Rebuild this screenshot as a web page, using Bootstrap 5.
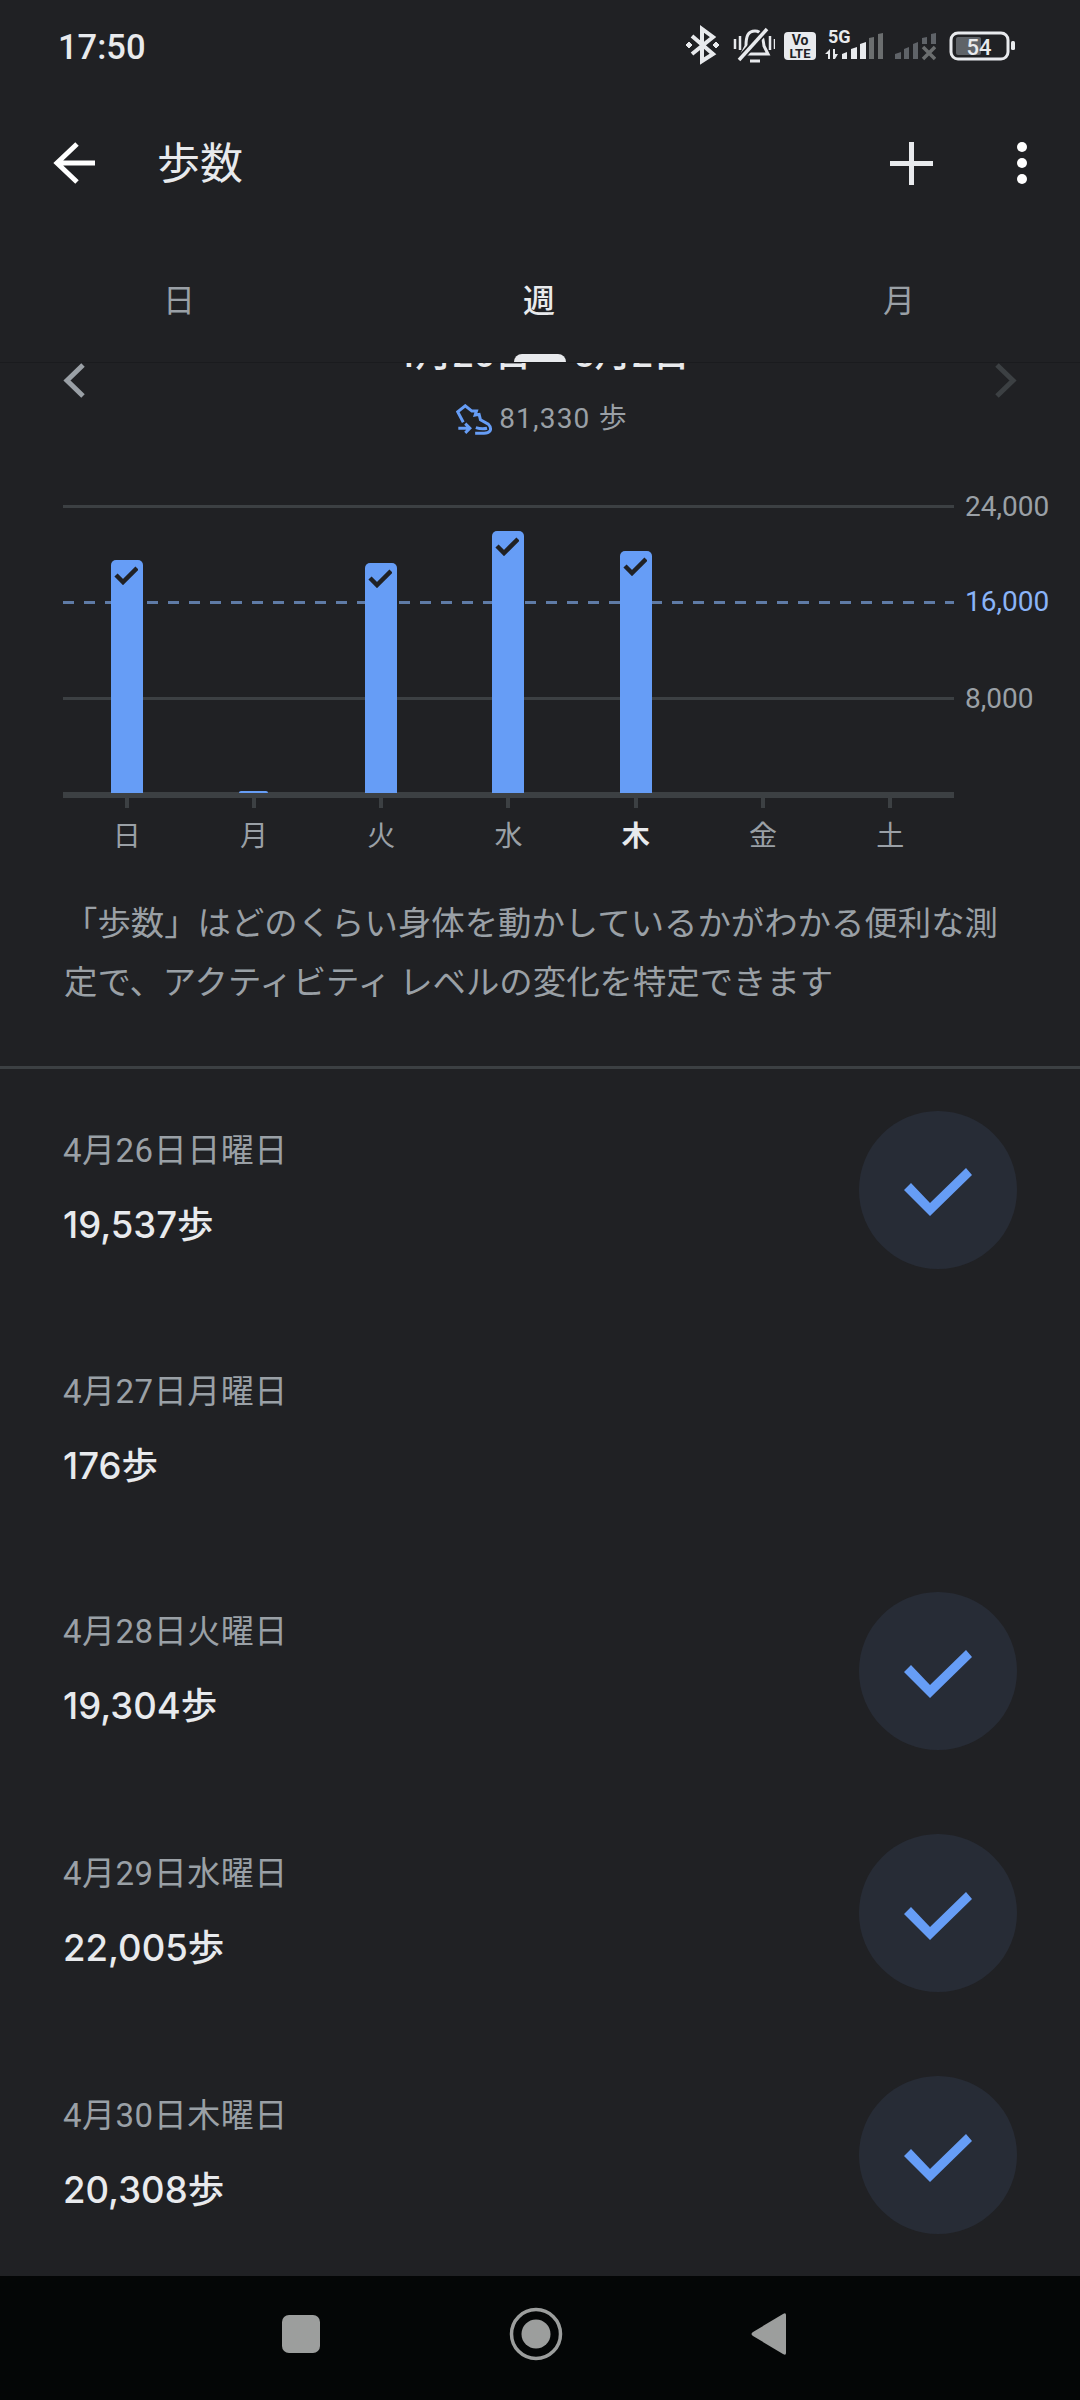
<!doctype html>
<html lang="ja">
<head>
<meta charset="utf-8">
<title>歩数</title>
<link href="https://cdn.jsdelivr.net/npm/bootstrap@5.3.0/dist/css/bootstrap.min.css" rel="stylesheet">
<style>
html,body{margin:0;background:#202124}
body{font-family:Roboto,"Noto Sans CJK JP",sans-serif;color:#e8eaed}
.screen{width:1080px;height:2400px;overflow:hidden;background:#202124}
.status-row{height:86px;padding:0 65px 0 58px}
.clock{font-size:34.5px;line-height:40px;margin-top:27px;font-weight:500}
.status-icons{margin-top:25px}
.status-row svg{display:block}
.gap-a{margin-left:14px}.gap-b{margin-left:9px}.gap-c{margin-left:11px}.gap-d{margin-left:13px}
.app-row{height:154px;padding-left:53px;padding-right:53px}
.app-title{font-size:43px;line-height:52px;margin-left:62px;padding-top:2px}
.act-plus{margin-right:84px}
.tab-row{height:122px;position:relative}
.tab-cell{font-size:32px;line-height:40px;color:#9aa0a6;text-align:center;padding:0 2px 0 0}
.tab-cell.is-on{color:#e8eaed;font-weight:500}
.tab-mark{position:absolute;left:514px;bottom:0;width:52px;height:8px;background:#e8eaed;border-radius:8px 8px 0 0}
.head-wrap{border-bottom:1px solid #1a1b1e}
.range-row{height:35px;padding:0 63px}
.range-clip{height:10px;overflow:hidden;font-size:37px;font-weight:500;line-height:44px;align-self:flex-start;padding-left:4px}
.range-clip span{display:block;margin-top:-30px;white-space:nowrap}
.total-row{height:40px;font-size:28px;line-height:40px;color:#9aa0a6;gap:6px;letter-spacing:1.2px;padding-top:2px;margin-left:4px}
.plot{position:relative;width:891px;margin:67px 0 0 63px;height:287px}
.gline{height:96px;border-top:3px solid #3c4043;position:relative}
.gline.dash{border-top:0;height:96px}
.gline.dash::before{content:"";display:block;height:3px;background:repeating-linear-gradient(90deg,#5f7ba6 0 11px,transparent 11px 21px)}
.gline b{position:absolute;left:902px;top:-19px;font-weight:400;font-size:28px;line-height:36px;color:#9aa0a6;white-space:nowrap}
.gline.dash b{color:#8ab4f8;top:-17px}
.bar-lay{position:absolute;left:0;right:0;top:0;height:288px;display:grid;grid-template-columns:repeat(7,1fr);align-items:end;justify-items:center}
.bar-col{width:32px;background:#669df6;border-radius:5px 5px 0 0;display:flex;justify-content:center;padding-top:6px}
.bar-col svg{margin-right:2px}
.bar-col.tiny{width:29px;padding:0}
.base-line{height:6px;background:#3c4043;width:891px;margin-left:63px}
.week-grid{display:grid;grid-template-columns:repeat(7,1fr);width:891px;margin-left:63px;justify-items:center}
.week-tick{width:4px;height:10px;background:#3c4043}
.week-name{font-size:28px;line-height:34px;color:#9aa0a6;margin-top:12px}
.week-name.is-on{color:#e8eaed;font-weight:700}
.desc-text{margin:40px 64px 54px;font-size:33.4px;line-height:59px;color:#9aa0a6;height:118px;white-space:nowrap}
.rule-line{height:3px;background:#3c4043}
.day-list{--bs-list-group-bg:transparent;--bs-list-group-border-width:0;border-radius:0}
.day-item{padding:0 63px;display:flex;justify-content:space-between;align-items:center;height:242px;color:#e8eaed}
.day-item.first{height:241px}
.day-item.short{height:240px}
.day-date{font-size:33px;line-height:40px;color:#9aa0a6;letter-spacing:.5px;margin-bottom:32px}
.day-value{font-family:Inter,"Noto Sans CJK JP",sans-serif;font-size:36.5px;line-height:44px;font-weight:500}
.day-text{align-self:flex-start;padding-top:62px}
.done-dot{width:158px;height:158px;border-radius:50%;background:#272c36}
.done-dot svg{margin-top:5px}
.sys-nav{height:124px;background:#040606}
.sys-nav svg{display:block}
</style>
</head>
<body>
<div class="screen d-flex flex-column">
  <div class="head-wrap">
    <div class="status-row d-flex justify-content-between align-items-start">
      <div class="clock">17:50</div>
      <div class="status-icons d-flex align-items-start">
        <svg width="33" height="40" viewBox="686 25 33 40" fill="none" stroke="#e8eaed" stroke-width="4"><path d="M692 36L713 54L702 61V29L713 37L692 54"/><path d="M686 45l3-3 3 3-3 3zM713 45l3-3 3 3-3 3z" fill="#e8eaed" stroke-width="1"/></svg>
        <svg class="gap-a" width="42" height="40" viewBox="733 25 42 40" fill="none" stroke="#e8eaed" stroke-width="3"><path d="M735 39v10M740 36v14M770 36v14M775 39v10" stroke-width="2.500"/><path d="M746 46C746 36 748 31 755 31C762 31 763 38 764 46L768 54H742Z"/><path d="M750 61H760" stroke-width="3"/><path d="M739 60L767 29" stroke="#202124" stroke-width="7"/><path d="M739 60L767 29" stroke-width="3.500"/></svg>
        <svg class="gap-b" width="32" height="40" viewBox="784 25 32 40"><rect x="784" y="32" width="32" height="28" rx="4" fill="#e8eaed"/><text x="800" y="45" text-anchor="middle" font-family="Roboto,sans-serif" font-size="14" font-weight="700" fill="#202124">Vo</text><text x="800" y="57.500" text-anchor="middle" font-family="Roboto,sans-serif" font-size="13" font-weight="700" fill="#202124">LTE</text></svg>
        <svg class="gap-b" width="59" height="40" viewBox="825 25 59 40"><text x="828" y="43" font-family="Roboto,sans-serif" font-size="18" font-weight="700" fill="#e8eaed">5G</text><path d="M830 49v10h-2v-5h-3zM833 49h2v5h3l-3 5h-2z" fill="#e8eaed"/><path d="M842 59v-5l5-2v7zM851 59V49l6-2v12zM860 59V44l6-2v17z" fill="#e8eaed"/><path d="M869 59V38l5-1v22zM878 59V34l5-1v26z" fill="#6b6e6f"/></svg>
        <svg class="gap-c" width="41" height="40" viewBox="895 25 41 40"><path d="M895 59v-5l6-2v7zM904 59V49l5-2v12zM913 59V44l5-2v17zM922 44v-6l5-1v7zM931 44V34l5-1v11z" fill="#5f6368"/><path d="M923 47l12 12M935 47l-12 12" stroke="#6b6e6f" stroke-width="3.500"/></svg>
        <svg class="gap-d" width="66" height="40" viewBox="949 25 66 40"><rect x="951" y="33" width="57" height="26" rx="7" fill="none" stroke="#e8eaed" stroke-width="3"/><rect x="956" y="37" width="25" height="18" rx="2" fill="#5f6368"/><text x="979" y="55" text-anchor="middle" font-family="Roboto,sans-serif" font-size="22" font-weight="500" fill="#e8eaed">54</text><rect x="1011" y="41" width="4" height="9" rx="1.500" fill="#e8eaed"/></svg>
      </div>
    </div>
    <div class="app-row d-flex align-items-center">
      <svg width="42" height="42" viewBox="0 0 42 42" fill="none" stroke="#fff" stroke-width="5"><path d="M42 21H4M24 2L4 21L24 40"/></svg>
      <div class="app-title flex-grow-1">歩数</div>
      <svg class="act-plus" width="43" height="43" viewBox="0 0 43 43" stroke="#e8eaed" stroke-width="5"><path d="M21.500 0V43M0 21.500H43"/></svg>
      <svg width="10" height="42" viewBox="0 0 10 42" fill="#fff"><circle cx="5" cy="5" r="5"/><circle cx="5" cy="21" r="5"/><circle cx="5" cy="37" r="5"/></svg>
    </div>
    <div class="tab-row row g-0 align-items-center">
      <div class="col-4 tab-cell">日</div>
      <div class="col-4 tab-cell is-on">週</div>
      <div class="col-4 tab-cell">月</div>
      <div class="tab-mark"></div>
    </div>
  </div>

  <div class="range-row d-flex justify-content-between align-items-center">
    <svg width="22" height="35" viewBox="0 0 22 35" fill="none" stroke="#9aa0a6" stroke-width="5"><path d="M20 2L4 17.500L20 33"/></svg>
    <div class="range-clip"><span>4月26日 – 5月2日</span></div>
    <svg width="22" height="35" viewBox="0 0 22 35" fill="none" stroke="#3c4043" stroke-width="5"><path d="M2 2L18 17.500L2 33"/></svg>
  </div>
  <div class="total-row d-flex justify-content-center align-items-center">
    <svg width="37" height="31" viewBox="350 245 112 93" fill="none" stroke="#669df6" stroke-width="9"><path d="M372 300L355 268L378 250L398 266H412L408 278L420 276L424 292L448 306Q458 316 453 326Q448 333 435 333H408"/><path d="M410 316Q428 322 444 318"/><path d="M357 318H390M378 304L392 318L378 332"/></svg>
    <span>81,330 歩</span>
  </div>

  <div class="plot">
    <div class="gline"><b>24,000</b></div>
    <div class="gline dash"><b>16,000</b></div>
    <div class="gline"><b>8,000</b></div>
    <div class="bar-lay">
      <div class="bar-col" style="height:233px"><svg width="24" height="19" viewBox="0 0 24 19" fill="none" stroke="#202124" stroke-width="4.500"><path d="M2 9L9 16L23 2"/></svg></div>
      <div class="bar-col tiny" style="height:2px"></div>
      <div class="bar-col" style="height:230px"><svg width="24" height="19" viewBox="0 0 24 19" fill="none" stroke="#202124" stroke-width="4.500"><path d="M2 9L9 16L23 2"/></svg></div>
      <div class="bar-col" style="height:262px"><svg width="24" height="19" viewBox="0 0 24 19" fill="none" stroke="#202124" stroke-width="4.500"><path d="M2 9L9 16L23 2"/></svg></div>
      <div class="bar-col" style="height:242px"><svg width="24" height="19" viewBox="0 0 24 19" fill="none" stroke="#202124" stroke-width="4.500"><path d="M2 9L9 16L23 2"/></svg></div>
      <div></div><div></div>
    </div>
  </div>
  <div class="base-line"></div>
  <div class="week-grid">
    <div class="week-tick"></div><div class="week-tick"></div><div class="week-tick"></div><div class="week-tick"></div><div class="week-tick"></div><div class="week-tick"></div><div class="week-tick"></div>
    <div class="week-name">日</div><div class="week-name">月</div><div class="week-name">火</div><div class="week-name">水</div><div class="week-name is-on">木</div><div class="week-name">金</div><div class="week-name">土</div>
  </div>

  <div class="desc-text">「歩数」はどのくらい身体を動かしているかがわかる便利な測<br>定で、アクティビティ レベルの変化を特定できます</div>
  <div class="rule-line"></div>

  <div class="list-group day-list flex-grow-1">
    <div class="list-group-item day-item first"><div class="day-text"><div class="day-date">4月26日日曜日</div><div class="day-value">19,537歩</div></div><div class="done-dot d-flex align-items-center justify-content-center"><svg width="68" height="48" viewBox="904 1168 68 48" fill="#669df6"><path d="M966 1168L972 1175L930 1216L904 1190L911 1183L930 1203Z"/></svg></div></div>
    <div class="list-group-item day-item short"><div class="day-text"><div class="day-date">4月27日月曜日</div><div class="day-value">176歩</div></div></div>
    <div class="list-group-item day-item"><div class="day-text"><div class="day-date">4月28日火曜日</div><div class="day-value">19,304歩</div></div><div class="done-dot d-flex align-items-center justify-content-center"><svg width="68" height="48" viewBox="904 1168 68 48" fill="#669df6"><path d="M966 1168L972 1175L930 1216L904 1190L911 1183L930 1203Z"/></svg></div></div>
    <div class="list-group-item day-item"><div class="day-text"><div class="day-date">4月29日水曜日</div><div class="day-value">22,005歩</div></div><div class="done-dot d-flex align-items-center justify-content-center"><svg width="68" height="48" viewBox="904 1168 68 48" fill="#669df6"><path d="M966 1168L972 1175L930 1216L904 1190L911 1183L930 1203Z"/></svg></div></div>
    <div class="list-group-item day-item"><div class="day-text"><div class="day-date">4月30日木曜日</div><div class="day-value">20,308歩</div></div><div class="done-dot d-flex align-items-center justify-content-center"><svg width="68" height="48" viewBox="904 1168 68 48" fill="#669df6"><path d="M966 1168L972 1175L930 1216L904 1190L911 1183L930 1203Z"/></svg></div></div>
  </div>

  <div class="sys-nav d-flex align-items-center">
    <svg width="1080" height="124" viewBox="0 2276 1080 124"><rect x="282" y="2315" width="38" height="38" rx="7" fill="#9c9e9d"/><circle cx="536" cy="2334" r="24.500" fill="none" stroke="#9c9e9d" stroke-width="3.500"/><circle cx="536" cy="2334" r="14.500" fill="#9c9e9d"/><path d="M786 2315V2353Q786 2356 783 2354L753 2336Q750 2334 753 2332L783 2314Q786 2312 786 2315Z" fill="#9c9e9d"/></svg>
  </div>
</div>
<script src="https://cdn.jsdelivr.net/npm/bootstrap@5.3.0/dist/js/bootstrap.bundle.min.js"></script>
</body>
</html>
